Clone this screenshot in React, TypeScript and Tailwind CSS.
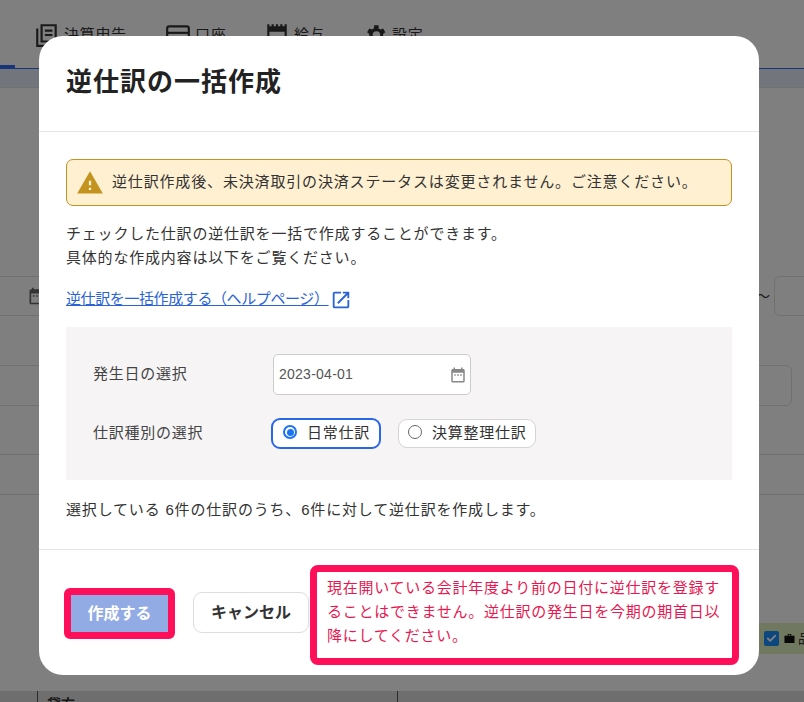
import { Check } from 'lucide-react';

const font = { fontFamily: '"Liberation Sans", "Noto Sans CJK JP", sans-serif' };

function CalendarIcon({ className }: { className: string }) {
    return (
        <svg viewBox="0 0 24 24" fill="currentColor" className={className}>
            <path d="M9 11H7v2h2v-2zm4 0h-2v2h2v-2zm4 0h-2v2h2v-2zm2-7h-1V2h-2v2H8V2H6v2H5c-1.11 0-1.99.9-1.99 2L3 20c0 1.1.89 2 2 2h14c1.1 0 2-.9 2-2V6c0-1.1-.9-2-2-2zm0 16H5V9h14v11z" />
        </svg>
    );
}

function WarningIcon() {
    return (
        <svg viewBox="0 0 24 24" fill="#c4921f" className="h-[28px] w-[28px] shrink-0">
            <path d="M1 21h22L12 2 1 21zm12-3h-2v-2h2v2zm0-4h-2v-4h2v4z" />
        </svg>
    );
}

function ExternalIcon() {
    return (
        <svg viewBox="0 0 24 24" fill="#2a63d4" className="ml-[1px] inline-block h-[22px] w-[22px] align-[-7px]">
            <path d="M19 19H5V5h7V3H5a2 2 0 0 0-2 2v14a2 2 0 0 0 2 2h14c1.1 0 2-.9 2-2v-7h-2v7zM14 3v2h3.59l-9.83 9.83 1.41 1.41L19 6.41V10h2V3h-7z" />
        </svg>
    );
}

function BookIcon() {
    return (
        <svg viewBox="0 0 24 24" fill="none" stroke="#333" strokeWidth="2" className="h-[26px] w-[26px]">
            <path d="M7 3h13v15H7zM3 6v16h14M10 8h7M10 12h7" />
        </svg>
    );
}

function CardIcon() {
    return (
        <svg viewBox="0 0 24 24" fill="none" stroke="#333" strokeWidth="2" className="h-[26px] w-[26px]">
            <rect x="2" y="4" width="20" height="16" rx="2" />
            <path d="M2 10h20" />
        </svg>
    );
}

function PadIcon() {
    return (
        <svg viewBox="0 0 24 24" fill="#333" className="h-[26px] w-[26px]">
            <path d="M3 2h2v2h2V2h2v2h2V2h2v2h2V2h2v2h2V2h2v20H3zM5 9v11h14V9z" />
        </svg>
    );
}

function GearIcon() {
    return (
        <svg viewBox="0 0 24 24" fill="#333" className="h-[26px] w-[26px]">
            <path d="M19.4 13c.1-.3.1-.7.1-1s0-.7-.1-1l2.1-1.6-2-3.500-2.500 1c-.5-.4-1.100-.7-1.700-1L15.300 3h-4l-.4 2.900c-.6.2-1.200.6-1.700 1l-2.500-1-2 3.500L6.800 11c-.1.300-.1.700-.1 1s0 .7.100 1l-2.100 1.600 2 3.500 2.500-1c.5.400 1.100.7 1.700 1l.4 2.900h4l.4-2.900c.6-.2 1.200-.6 1.700-1l2.500 1 2-3.500zM13.300 15.500a3.500 3.500 0 1 1 0-7 3.500 3.500 0 0 1 0 7z" />
        </svg>
    );
}

function BagIcon() {
    return (
        <svg viewBox="0 0 12 12" fill="#111" className="ml-[5px] h-[11px] w-[11px] shrink-0">
            <path d="M4 1h4v2h3.500v8H.5V3H4zM5 2v1h2V2z" fillRule="evenodd" />
        </svg>
    );
}

function Background() {
    return (
        <div className="flex h-full flex-col bg-white">
            <nav className="relative flex h-[69px] shrink-0 items-end border-b border-[#2f6bf0] pb-[20px] pl-[34px] text-[15px] tracking-[0.7px] text-[#333]">
                <div className="absolute bottom-[-1px] left-0 h-[4px] w-[15px] bg-[#2f6bf0]" />
                <div className="flex w-[131px] items-center gap-[4px]"><BookIcon />決算申告</div>
                <div className="flex w-[99px] items-center gap-[4px]"><CardIcon />口座</div>
                <div className="flex w-[98px] items-center gap-[4px]"><PadIcon />給与</div>
                <div className="flex items-center gap-[4px]"><GearIcon />設定</div>
            </nav>
            <div className="h-[19px] shrink-0 border-b border-[#e0e0e0] bg-[#e7ebfb]" />
            <div className="mt-[188px] flex h-[40px] shrink-0 items-center justify-between">
                <div className="-ml-[8px] flex h-full w-[100px] items-center rounded-md border border-[#e0e0e0] pl-[34px]">
                    <CalendarIcon className="h-[20px] w-[20px] text-[#666]" />
                </div>
                <div className="flex h-full items-center gap-[4px]">
                    <span className="text-[14px] text-[#333]">〜</span>
                    <div className="-mr-[8px] h-full w-[38px] rounded-md border border-[#e0e0e0]" />
                </div>
            </div>
            <div className="-ml-[8px] mt-[49px] h-[41px] w-[800px] shrink-0 rounded-md border border-[#e0e0e0]" />
            <div className="mt-[48px] h-[41px] shrink-0 border-y border-[#e0e0e0]" />
            <div className="ml-[100px] mt-[128px] flex h-[31px] shrink-0 items-center justify-end bg-[#e1f2be] text-[13px] text-[#333]">
                <span className="flex h-[15px] w-[15px] items-center justify-center rounded-[2px] bg-[#1a8eff]">
                    <Check className="h-[11px] w-[11px] text-white" strokeWidth={4} />
                </span>
                <BagIcon />
                <span className="ml-[3px] w-[6px] overflow-hidden whitespace-nowrap">品目</span>
            </div>
            <div className="mt-[37px] flex flex-1 bg-[#dedcdc] text-[14px] font-bold text-[#333]">
                <div className="ml-[37px] w-[361px] border-x border-[#555] pl-[9px] pt-[3px]">貸方</div>
            </div>
        </div>
    );
}

export default function App() {
    return (
        <div className="relative h-[702px] w-[804px] overflow-hidden" style={font}>
            <Background />
            <div className="absolute inset-0 bg-black/50" />
            <div className="absolute left-[39px] top-[36px] flex h-[639px] w-[720px] flex-col rounded-[24px] bg-white text-[#333]">
                <header className="flex h-[96px] shrink-0 items-center border-b border-[#e5e5e5] px-[27px] pb-[2px]">
                    <h1 className="text-[26px] font-bold tracking-[1px] text-[#222]">逆仕訳の一括作成</h1>
                </header>

                <main className="flex flex-1 flex-col px-[27px] pt-[27px] text-[15px]">
                    <div className="flex h-[47px] items-center gap-[8px] rounded-[7px] border border-[#c4921f] bg-[#fff0d2] pl-[9px] tracking-[0.84px]">
                        <WarningIcon />
                        <span>逆仕訳作成後、未決済取引の決済ステータスは変更されません。ご注意ください。</span>
                    </div>
                    <p className="mt-[16px] leading-[24px] tracking-[0.8px]">
                        チェックした仕訳の逆仕訳を一括で作成することができます。
                        <br />
                        具体的な作成内容は以下をご覧ください。
                    </p>
                    <div className="mt-[17px] h-[24px] leading-[24px]">
                        <a className="tracking-[-0.4px] text-[#2a63d4] underline">逆仕訳を一括作成する（ヘルプページ）</a>
                        <ExternalIcon />
                    </div>

                    <section className="mt-[16px] h-[153px] shrink-0 bg-[#f6f4f5] pl-[27px] pt-[27px] tracking-[0.75px] text-[#444]">
                        <div className="flex items-center">
                            <span className="w-[180px]">発生日の選択</span>
                            <div className="flex h-[41px] w-[198px] items-center justify-between rounded-[5px] border border-[#ccc] bg-white pl-[5px] pr-[3px] text-[14px] tracking-[0.25px] text-[#555]">
                                2023-04-01
                                <CalendarIcon className="h-[18px] w-[18px] text-[#888]" />
                            </div>
                        </div>
                        <div className="mt-[23px] flex items-center">
                            <span className="w-[178px]">仕訳種別の選択</span>
                            <div className="flex h-[31px] w-[110px] items-center gap-[10px] rounded-[9px] border-2 border-[#2a66e8] bg-white pl-[10px] text-[#333]">
                                <span className="-mt-[3px] flex h-[14px] w-[14px] items-center justify-center rounded-full border-2 border-[#1a73f0]">
                                    <span className="h-[7px] w-[7px] rounded-full bg-[#1a73f0]" />
                                </span>
                                日常仕訳
                            </div>
                            <div className="ml-[17px] flex h-[29px] w-[138px] items-center gap-[10px] rounded-[9px] border border-[#d5d5d5] bg-white pl-[9px] text-[#333]">
                                <span className="-mt-[3px] h-[14px] w-[14px] rounded-full border border-[#666]" />
                                決算整理仕訳
                            </div>
                        </div>
                    </section>
                    <p className="mt-[18px] leading-[24px] tracking-[0.82px]">選択している 6件の仕訳のうち、6件に対して逆仕訳を作成します。</p>
                </main>

                <footer className="flex h-[126px] shrink-0 items-start border-t border-[#e5e5e5] pl-[25px] pt-[15px]">
                    <div className="mt-[23px] h-[51px] w-[111px] rounded-[6px] border-[7px] border-[#ff0f5a]">
                        <button className="h-full w-full bg-[#92abe5] text-[16px] font-bold text-white">作成する</button>
                    </div>
                    <button className="ml-[18px] mt-[27px] h-[41px] w-[116px] rounded-[9px] border border-[#ddd] bg-white text-[16px] font-bold text-[#333]">キャンセル</button>
                    <div className="ml-[1px] h-[100px] w-[429px] rounded-[8px] border-[7px] border-[#ff0f5a] bg-white pl-[10px] pr-[4px] pt-[4px] text-[15px] leading-[24px] tracking-[0.75px] text-[#e8174f]">
                        現在開いている会計年度より前の日付に逆仕訳を登録することはできません。逆仕訳の発生日を今期の期首日以降にしてください。
                    </div>
                </footer>
            </div>
        </div>
    );
}
